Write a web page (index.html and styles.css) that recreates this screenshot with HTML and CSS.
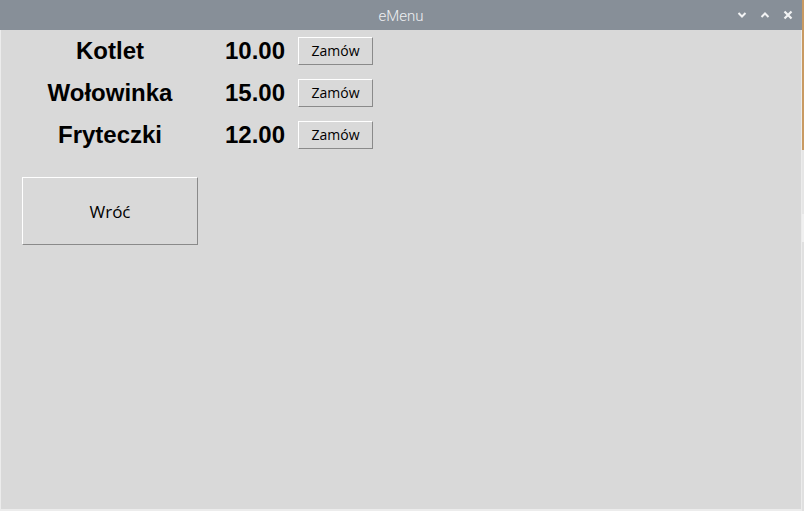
FILE: index.html
```html
<!DOCTYPE html>
<html lang="pl">
<head>
<meta charset="utf-8">
<title>eMenu</title>
<link rel="stylesheet" href="styles.css">
</head>
<body>
<div class="screen">
  <div class="window">
    <div class="titlebar">
      <span class="title">eMenu</span>
      <div class="controls">
        <svg class="ctl" width="10" height="8" viewBox="0 0 10 8"><path d="M1.5 2 L5 5.5 L8.5 2" fill="none" stroke="#f2f3f4" stroke-width="2"/></svg>
        <svg class="ctl" width="10" height="8" viewBox="0 0 10 8"><path d="M1.5 6 L5 2.5 L8.5 6" fill="none" stroke="#f2f3f4" stroke-width="2"/></svg>
        <svg class="ctl" width="10" height="10" viewBox="0 0 10 10"><path d="M1.5 1.5 L8.5 8.5 M8.5 1.5 L1.5 8.5" fill="none" stroke="#f2f3f4" stroke-width="2.2"/></svg>
      </div>
    </div>
    <div class="content">
      <div class="menu">
        <div class="name">Kotlet</div>
        <div class="price">10.00</div>
        <div class="cell"><button class="order">Zamów</button></div>
        <div class="name">Wołowinka</div>
        <div class="price">15.00</div>
        <div class="cell"><button class="order">Zamów</button></div>
        <div class="name">Fryteczki</div>
        <div class="price">12.00</div>
        <div class="cell"><button class="order">Zamów</button></div>
      </div>
      <button class="back">Wróć</button>
    </div>
  </div>
  <div class="desktop">
    <div class="d1"></div>
    <div class="d2"></div>
    <div class="d3"></div>
    <div class="d4"></div>
  </div>
</div>
</body>
</html>
```

FILE: styles.css
```css
html, body {
  margin: 0;
  padding: 0;
  background: #d9d9d9;
}
.screen {
  width: 804px;
  height: 511px;
  display: flex;
  overflow: hidden;
}
.window {
  width: 802px;
  height: 511px;
  display: flex;
  flex-direction: column;
}
.titlebar {
  height: 30px;
  background: #878f98;
  display: flex;
  align-items: center;
  justify-content: center;
  position: relative;
  flex: none;
}
.title {
  font-family: Roboto, "Liberation Sans", sans-serif;
  font-weight: 300;
  font-size: 15px;
  color: #eef0f2;
  margin-top: 1px;
}
.controls {
  position: absolute;
  right: 9px;
  top: 10px;
  display: flex;
  gap: 13px;
  align-items: center;
}
.content {
  flex: 1;
  background: #d9d9d9;
  border-left: 1px solid #ececec;
  border-right: 1px solid #ececec;
  border-bottom: 2px solid #ececec;
  padding: 0 0 0 21px;
}
.menu {
  display: grid;
  grid-template-columns: 176px 74px 75px;
  grid-auto-rows: 42px;
  column-gap: 13px;
  font-family: "Liberation Sans", Arial, sans-serif;
  font-weight: bold;
  font-size: 24px;
  color: #000;
}
.name {
  text-align: center;
  align-self: center;
}
.price {
  text-align: right;
  align-self: center;
}
.cell {
  display: flex;
  align-items: center;
}
.order {
  width: 75px;
  height: 28px;
  padding: 0;
  margin-top: -1px;
  background: #d9d9d9;
  border: 1px solid;
  border-color: #ffffff #8a8a8a #8a8a8a #ffffff;
  font-family: "Open Sans", "Noto Sans", sans-serif;
  font-size: 14px;
  color: #000;
}
.back {
  display: block;
  margin-top: 21px;
  width: 176px;
  height: 68px;
  padding: 0;
  background: #d9d9d9;
  border: 1px solid;
  border-color: #ffffff #8a8a8a #8a8a8a #ffffff;
  font-family: "Open Sans", "Noto Sans", sans-serif;
  font-size: 17px;
  color: #000;
}
.desktop {
  width: 2px;
  height: 511px;
  display: flex;
  flex-direction: column;
}
.d1 { height: 150px; background: #c99a62; }
.d2 { height: 64px; background: #e6e6e6; }
.d3 { height: 28px; background: #f0f0f0; }
.d4 { flex: 1; background: #e0e0e0; }
```
